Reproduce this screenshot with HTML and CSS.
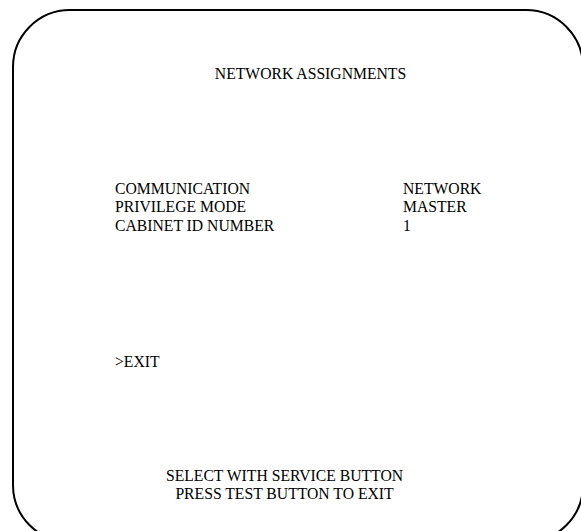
FILE: index.html
```html
<!DOCTYPE html>
<html lang="en">
<head>
  <meta charset="UTF-8" />
  <title>Network Assignments</title>
  <link rel="stylesheet" href="styles.css">
</head>
<body>

  <div class="frame">
    <div class="screen">
      <div class="title">NETWORK ASSIGNMENTS</div>

      <div class="settings">
        <div class="label">COMMUNICATION</div>
        <div class="value">NETWORK</div>
        <div class="label">PRIVILEGE MODE</div>
        <div class="value">MASTER</div>
        <div class="label">CABINET ID NUMBER</div>
        <div class="value">1</div>
      </div>

      <div class="menu">&gt;EXIT</div>

      <div class="footer">
        <div>SELECT WITH SERVICE BUTTON</div>
        <div>PRESS TEST BUTTON TO EXIT</div>
      </div>
    </div>
  </div>

</body>
</html>
```

FILE: styles.css
```css
body {
  margin: 0;
  padding: 0;
  background: #fff;
  color: #000;
  font-family: 'Liberation Serif', 'Times New Roman', serif;
  font-size: 15.7px;
  line-height: 18.5px;
}

.frame {
  width: 581px;
  height: 531px;
  padding-top: 9px;
  box-sizing: border-box;
  overflow: hidden;
}

.screen {
  box-sizing: border-box;
  width: 572px;
  height: 534px;
  margin-left: 12px;
  padding-top: 54px;
  border: 2px solid #000;
  border-radius: 58px;
}

.title {
  text-align: center;
  padding-left: 25px;
}

.settings {
  display: grid;
  grid-template-columns: 288px auto;
  margin-top: 96px;
  padding-left: 101px;
}

.menu {
  margin-top: 118px;
  padding-left: 101px;
}

.footer {
  margin-top: 95px;
  padding-right: 27px;
  text-align: center;
}
```
